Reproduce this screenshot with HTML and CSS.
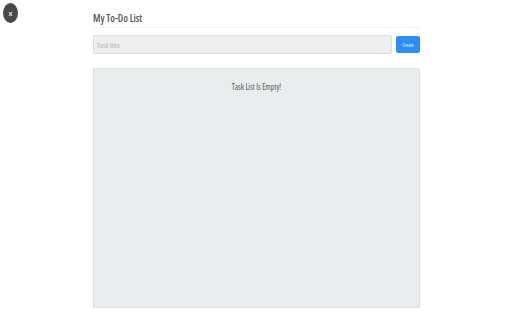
FILE: index.html
```html
<!DOCTYPE html>
<html lang="en">
<head>
    <meta charset="UTF-8">
    <title>My To-Do List</title>
    <link rel="stylesheet" href="styles.css">
</head>
<body>
    <button class="close-btn">x</button>
    <div class="container">
        <h1 class="title">My To-Do List</h1>
        <form class="task-form">
            <input type="text" class="task-input" placeholder="Task title">
            <button type="button" class="create-btn">Create</button>
        </form>
        <div class="task-list">
            <p class="empty-msg">Task List Is Empty!</p>
        </div>
    </div>
</body>
</html>
```

FILE: styles.css
```css
body {
    margin: 0;
    background: #ffffff;
    font-family: "Liberation Sans Narrow", "Open Sans", "Liberation Sans", sans-serif;
    font-stretch: condensed;
    color: #444;
}
.close-btn {
    position: absolute;
    top: 3px;
    left: 3px;
    width: 15px;
    height: 20px;
    border-radius: 50%;
    border: none;
    background: #484848;
    color: #ddd;
    font-size: 7px;
    font-weight: bold;
    padding: 0;
    font-family: inherit;
}
.container {
    width: 327px;
    margin-left: 93px;
    padding-top: 11px;
}
.title {
    margin: 0;
    font-size: 10px;
    font-weight: 600;
    color: #555;
    line-height: 15px;
    padding-bottom: 1px;
    border-bottom: 1px solid #f2f2f2;
}
.task-form {
    display: flex;
    align-items: center;
    gap: 4px;
    margin-top: 7px;
}
.task-input {
    flex: 1;
    height: 19px;
    box-sizing: border-box;
    border: 1px solid #dcdfe0;
    border-radius: 2px;
    background: #eceeef;
    padding: 0 3px;
    font-family: inherit;
    font-stretch: condensed;
    font-size: 7.5px;
    color: #444;
}
.task-input::placeholder {
    color: #b4b8ba;
}
.create-btn {
    width: 24px;
    height: 17px;
    border: none;
    border-radius: 2px;
    background: #2b8ff6;
    color: #e8f2ff;
    font-family: inherit;
    font-stretch: condensed;
    font-size: 5px;
    padding: 0;
}
.task-list {
    margin-top: 14px;
    height: 238px;
    background: #eaedee;
    border: 1px solid #dde0e1;
    border-radius: 2px;
    box-shadow: 0 1px 1px rgba(0, 0, 0, 0.12);
    text-align: center;
}
.empty-msg {
    margin: 12px 0 0;
    font-size: 8px;
    color: #555;
}
```
